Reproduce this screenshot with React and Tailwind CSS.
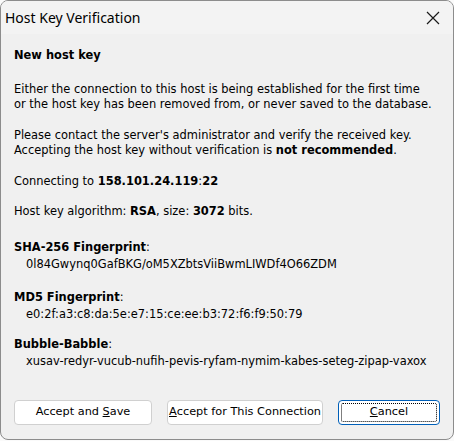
import React from "react";

const body = { fontFamily: '"DejaVu Sans", Verdana, sans-serif' };

function Btn({ children, focused, w }) {
  return (
    <div
      className={
        "h-[25px] flex items-center justify-center rounded-[4px] bg-white text-[11.3px] text-black " +
        (focused ? "border border-[#005fb8] p-[2px]" : "border border-[#d0d0d0]")
      }
      style={{ ...body, width: w }}
    >
      {focused ? (
        <div className="w-full h-full flex items-center justify-center border border-dotted border-black rounded-[2px]">
          {children}
        </div>
      ) : (
        children
      )}
    </div>
  );
}

export default function App() {
  return (
    <div className="w-[454px] h-[441px] bg-[#fafafa]">
      <div className="w-[454px] h-[440px] rounded-t-[8px] rounded-b-[8px] border border-[#8c8c8c] bg-[#f0f0f0] flex flex-col overflow-hidden">
        <div className="h-[33px] flex items-center justify-between pl-[4px] pr-[12px] bg-[#f3f3f3]">
          <span className="text-[14px] text-black" style={{ fontFamily: '"Noto Sans", "Open Sans", sans-serif' }}>
            Host Key Verification
          </span>
          <svg width="14" height="14" viewBox="0 0 14 14" className="mr-[1px]">
            <path d="M1 1 L13 13 M13 1 L1 13" stroke="#1a1a1a" strokeWidth="1.2" fill="none" />
          </svg>
        </div>
        <div className="flex-1 pl-[13px] pr-[6px] text-[11.45px] leading-[15.5px] text-black" style={body}>
          <div className="mt-[14px] font-bold">New host key</div>
          <div className="mt-[18px]">
            Either the connection to this host is being established for the first time
            <br />
            or the host key has been removed from, or never saved to the database.
          </div>
          <div className="mt-[15px]">
            Please contact the server's administrator and verify the received key.
            <br />
            Accepting the host key without verification is <b>not recommended</b>.
          </div>
          <div className="mt-[15px]">
            Connecting to <b>158.101.24.119</b>:<b>22</b>
          </div>
          <div className="mt-[15px]">
            Host key algorithm: <b>RSA</b>, size: <b>3072</b> bits.
          </div>
          <div className="mt-[20px] font-bold">SHA-256 Fingerprint<span className="font-normal">:</span></div>
          <div className="pl-[12px] mt-[2px]">0l84Gwynq0GafBKG/oM5XZbtsViiBwmLIWDf4O66ZDM</div>
          <div className="mt-[17px] font-bold">MD5 Fingerprint<span className="font-normal">:</span></div>
          <div className="pl-[12px] mt-[2px]">e0:2f:a3:c8:da:5e:e7:15:ce:ee:b3:72:f6:f9:50:79</div>
          <div className="mt-[14px] font-bold">Bubble-Babble<span className="font-normal">:</span></div>
          <div className="pl-[12px] mt-[2px]">xusav-redyr-vucub-nufih-pevis-ryfam-nymim-kabes-seteg-zipap-vaxox</div>
        </div>
        <div className="flex items-center pl-[13px] pb-[14px] gap-[15px]">
          <Btn w={138}>
            Accept and&nbsp;<u>S</u>ave
          </Btn>
          <Btn w={156}>
            <u>A</u>ccept for This Connection
          </Btn>
          <Btn w={102} focused>
            <u>C</u>ancel
          </Btn>
        </div>
      </div>
    </div>
  );
}
